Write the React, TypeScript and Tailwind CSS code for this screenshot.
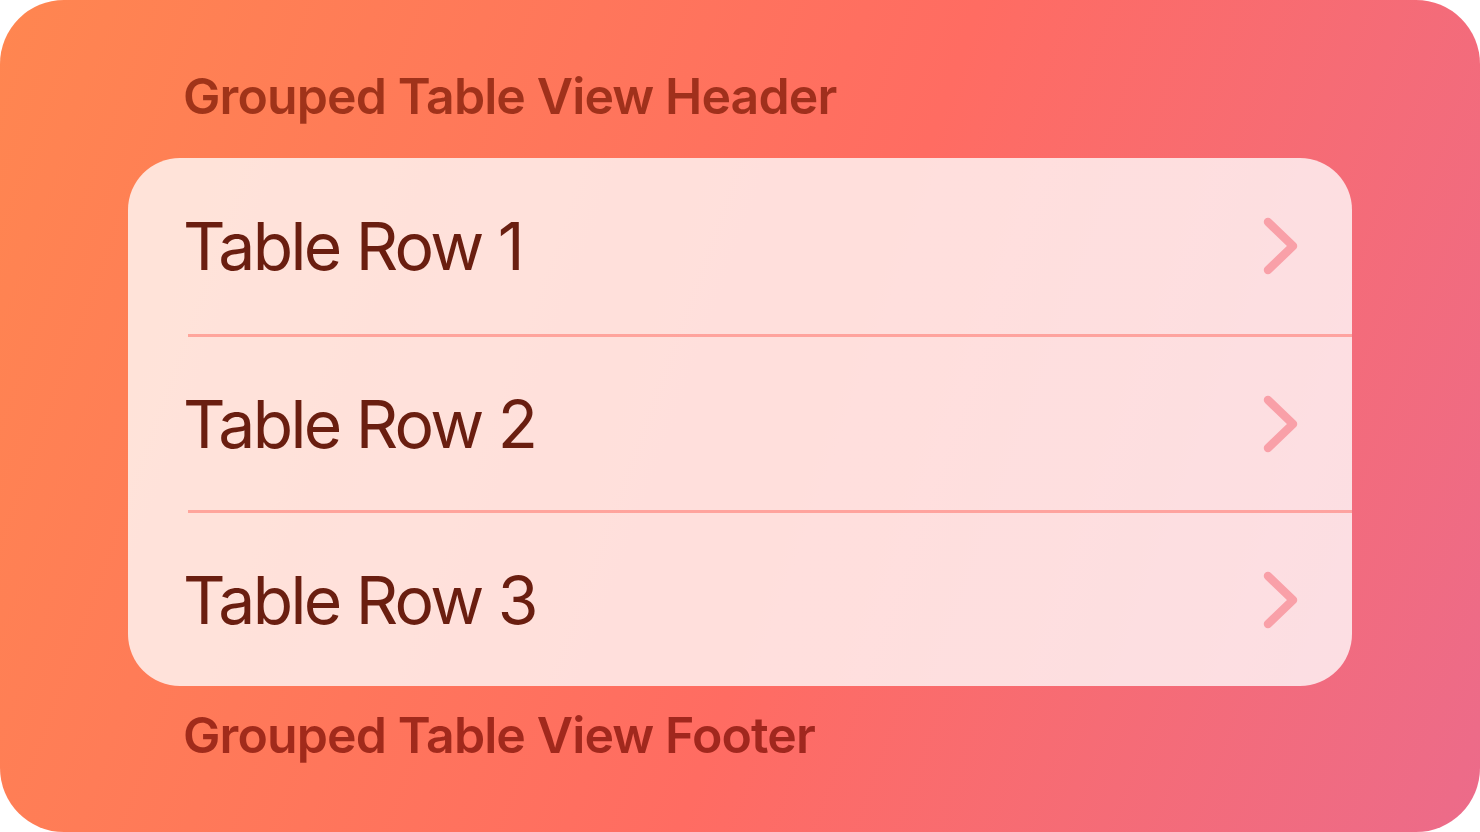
const rows = ["Table Row 1", "Table Row 2", "Table Row 3"];

function Chevron() {
  return (
    <svg width="40" height="60" viewBox="0 0 40 60" fill="none" className="shrink-0">
      <path
        d="M8 6 L33 30 L8 54"
        stroke="#f9a0a8"
        strokeWidth="8.5"
        strokeLinecap="round"
        strokeLinejoin="round"
      />
    </svg>
  );
}

export default function App() {
  return (
    <div className="h-[832px] w-[1480px] bg-white" style={{ fontFamily: "Inter, 'Noto Sans', sans-serif" }}>
      <div className="flex h-full w-full flex-col rounded-[64px] bg-[linear-gradient(110deg,#ff8650_0%,#ff6c62_55%,#ec6b8a_100%)] px-[128px] pt-[71px]">
        <h1 className="pl-[55px] text-[50px] font-semibold leading-none tracking-[-0.9px] text-[#781400]/70">
          Grouped Table View Header
        </h1>

        <div className="mt-[37px] flex flex-col overflow-hidden rounded-[52px] bg-white/[0.78]">
          {rows.map((label, i) => (
            <div key={label} className="flex flex-col">
              <div
                className={
                  "flex items-center justify-between pl-[55px] pr-[52px] " +
                  (i === 0 ? "h-[176px]" : "h-[173px]")
                }
              >
                <span className="text-[66px] leading-none tracking-[-2.6px] text-[#6a1e10]">{label}</span>
                <Chevron />
              </div>
              {i < rows.length - 1 && <div className="ml-[60px] h-[3px] bg-[#ff5a50]/45" />}
            </div>
          ))}
        </div>

        <p className="mt-[24px] pl-[55px] text-[50px] font-semibold leading-none tracking-[-0.9px] text-[#7a0a00]/70">
          Grouped Table View Footer
        </p>
      </div>
    </div>
  );
}
